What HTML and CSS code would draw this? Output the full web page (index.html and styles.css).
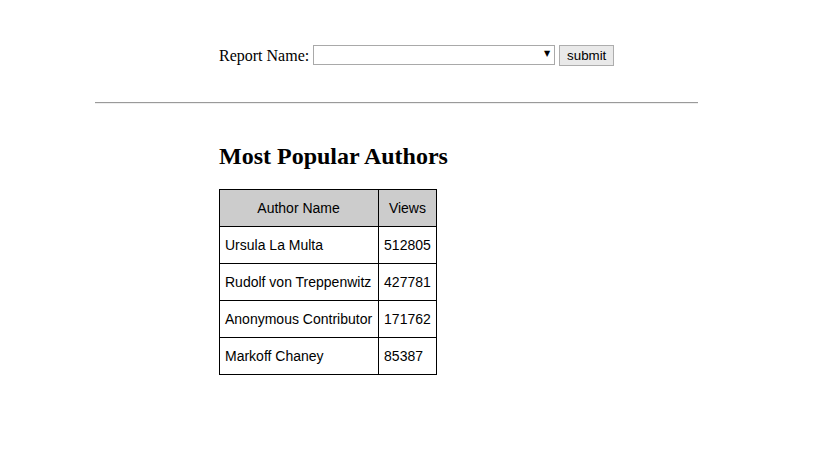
FILE: index.html
```html
<!DOCTYPE html>
<html>
<head>
<meta charset="utf-8">
<link rel="stylesheet" href="styles.css">
</head>
<body>
<form class="report-form">
  <label class="report-label" for="report">Report Name:</label>
  <span class="select-wrap">
    <select id="report" class="report-select"><option></option></select>
    <span class="select-arrow">&#9660;</span>
  </span>
  <button type="button" class="submit-btn">submit</button>
</form>
<hr class="divider">
<section class="content">
  <h2 class="title">Most Popular Authors</h2>
  <table class="authors">
    <thead>
      <tr><th class="name-col">Author Name</th><th>Views</th></tr>
    </thead>
    <tbody>
      <tr><td class="name-col">Ursula La Multa</td><td>512805</td></tr>
      <tr><td class="name-col">Rudolf von Treppenwitz</td><td>427781</td></tr>
      <tr><td class="name-col">Anonymous Contributor</td><td>171762</td></tr>
      <tr><td class="name-col">Markoff Chaney</td><td>85387</td></tr>
    </tbody>
  </table>
</section>
</body>
</html>
```
FILE: styles.css
```css
html, body {
  margin: 0;
  padding: 0;
  background: #fff;
}
body {
  font-family: "Liberation Serif", "Times New Roman", serif;
  font-size: 16px;
  color: #000;
}
.report-form {
  display: flex;
  align-items: center;
  padding: 45px 0 0 219px;
  margin: 0;
  height: 21px;
}
.report-label {
  line-height: 18px;
  margin-right: 4px;
}
.select-wrap {
  position: relative;
  display: inline-block;
  width: 242px;
  height: 20px;
  margin-right: 4px;
  align-self: flex-start;
}
.report-select {
  -webkit-appearance: none;
  appearance: none;
  box-sizing: border-box;
  width: 242px;
  height: 20px;
  margin: 0;
  border: 1px solid #a9a9a9;
  background: #fff;
  font-family: "Liberation Sans", Arial, sans-serif;
  font-size: 13px;
  display: block;
}
.select-arrow {
  position: absolute;
  right: 5px;
  top: 5px;
  font-size: 8px;
  line-height: 8px;
  color: #000;
  font-family: "DejaVu Sans", sans-serif;
  pointer-events: none;
}
.submit-btn {
  box-sizing: border-box;
  width: 55px;
  height: 21px;
  padding: 0;
  margin: 0;
  border: 1px solid #adadad;
  background: #e9e9e9;
  font-family: "Liberation Sans", Arial, sans-serif;
  font-size: 13.33px;
  color: #000;
  align-self: flex-start;
}
.divider {
  box-sizing: border-box;
  width: 603px;
  height: 2px;
  margin: 36px 0 0 95px;
  border: 0;
  border-top: 1px solid #9a9a9a;
  border-bottom: 1px solid #eeeeee;
}
.content {
  padding-left: 219px;
}
.title {
  margin: 39px 0 19px 0;
  font-size: 24px;
  line-height: 27px;
  font-weight: bold;
}
.authors {
  border-collapse: collapse;
  font-family: "Liberation Sans", Arial, sans-serif;
  font-size: 14px;
  color: #000;
}
.authors th,
.authors td {
  border: 1px solid #000;
  padding: 10px 5px;
  line-height: 16px;
  text-align: left;
}
.authors .name-col {
  padding-right: 6px;
}
.authors th {
  background: #cccccc;
  font-weight: normal;
  text-align: center;
}
```
